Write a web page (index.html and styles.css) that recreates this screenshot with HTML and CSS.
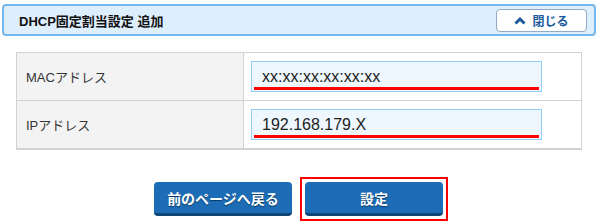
FILE: index.html
```html
<!DOCTYPE html>
<html lang="ja">
<head>
    <meta charset="UTF-8">
    <title>DHCP固定割当設定 追加</title>
    <link rel="stylesheet" href="styles.css">
</head>
<body>
    <div class="panel-head">
        <h2>DHCP固定割当設定 追加</h2>
        <button class="close-btn">
            <svg width="12" height="9" viewBox="0 0 12 9"><path d="M1.5 7.5 L6 3 L10.5 7.5" fill="none" stroke="#1a5a9c" stroke-width="3"/></svg>
            閉じる
        </button>
    </div>
    <table class="form-table">
        <tr>
            <th>MACアドレス</th>
            <td><input type="text" class="field" value="xx:xx:xx:xx:xx:xx"></td>
        </tr>
        <tr>
            <th>IPアドレス</th>
            <td><input type="text" class="field" value="192.168.179.X"></td>
        </tr>
    </table>
    <div class="actions">
        <button class="btn">前のページへ戻る</button>
        <span class="marked"><button class="btn">設定</button></span>
    </div>
</body>
</html>
```

FILE: styles.css
```css
body {
    margin: 0;
    padding: 4px 4px 0 2px;
    background: #fff;
    font-family: "Liberation Sans", "Noto Sans CJK JP", sans-serif;
    color: #333;
}
.panel-head {
    display: flex;
    justify-content: space-between;
    align-items: center;
    height: 28px;
    padding: 0 7px 0 15px;
    background: #ddeefd;
    border: 2px solid #74b8ee;
    border-radius: 4px;
}
.panel-head h2 {
    margin: 0;
    font-size: 13px;
    font-weight: bold;
    color: #111;
}
.close-btn {
    display: flex;
    align-items: center;
    justify-content: center;
    gap: 6px;
    width: 91px;
    height: 23px;
    padding: 0;
    background: #fff;
    border: 1px solid #92aac6;
    border-radius: 4px;
    font-family: inherit;
    font-size: 12px;
    font-weight: bold;
    color: #1a5a9c;
}
.form-table {
    margin: 16px 0 0 14px;
    width: 566px;
    border-collapse: collapse;
    border: 1px solid #d2d2d2;
    border-bottom-width: 2px;
}
.form-table th, .form-table td {
    height: 47px;
    border: 1px solid #d2d2d2;
    padding: 0;
}
.form-table th {
    width: 217px;
    padding-left: 9px;
    background: #f3f3f3;
    text-align: left;
    font-size: 13px;
    font-weight: normal;
    color: #333;
}
.form-table td {
    padding-left: 7px;
    background: #fff;
}
.field {
    display: block;
    box-sizing: border-box;
    width: 291px;
    height: 31px;
    padding: 0 0 0 10px;
    border: 1px solid #92cdf5;
    background: #eef6fe linear-gradient(#f00, #f00) no-repeat center bottom 1px / calc(100% - 4px) 3px;
    font-family: "Liberation Sans", sans-serif;
    font-size: 16px;
    color: #222;
    outline: none;
}
.actions {
    display: flex;
    justify-content: center;
    align-items: center;
    gap: 8px;
    margin-top: 27px;
    padding-left: 4px;
}
.btn {
    display: block;
    width: 138px;
    height: 34px;
    padding: 0;
    background: #1c6db5;
    border: none;
    border-bottom: 3px solid #0e4678;
    border-radius: 4px;
    font-family: inherit;
    font-size: 14px;
    font-weight: bold;
    color: #fff;
    text-shadow: 0 1px 1px #0b3a66;
}
.marked {
    display: block;
    padding: 3px;
    border: 2px solid #ff0000;
}
```
